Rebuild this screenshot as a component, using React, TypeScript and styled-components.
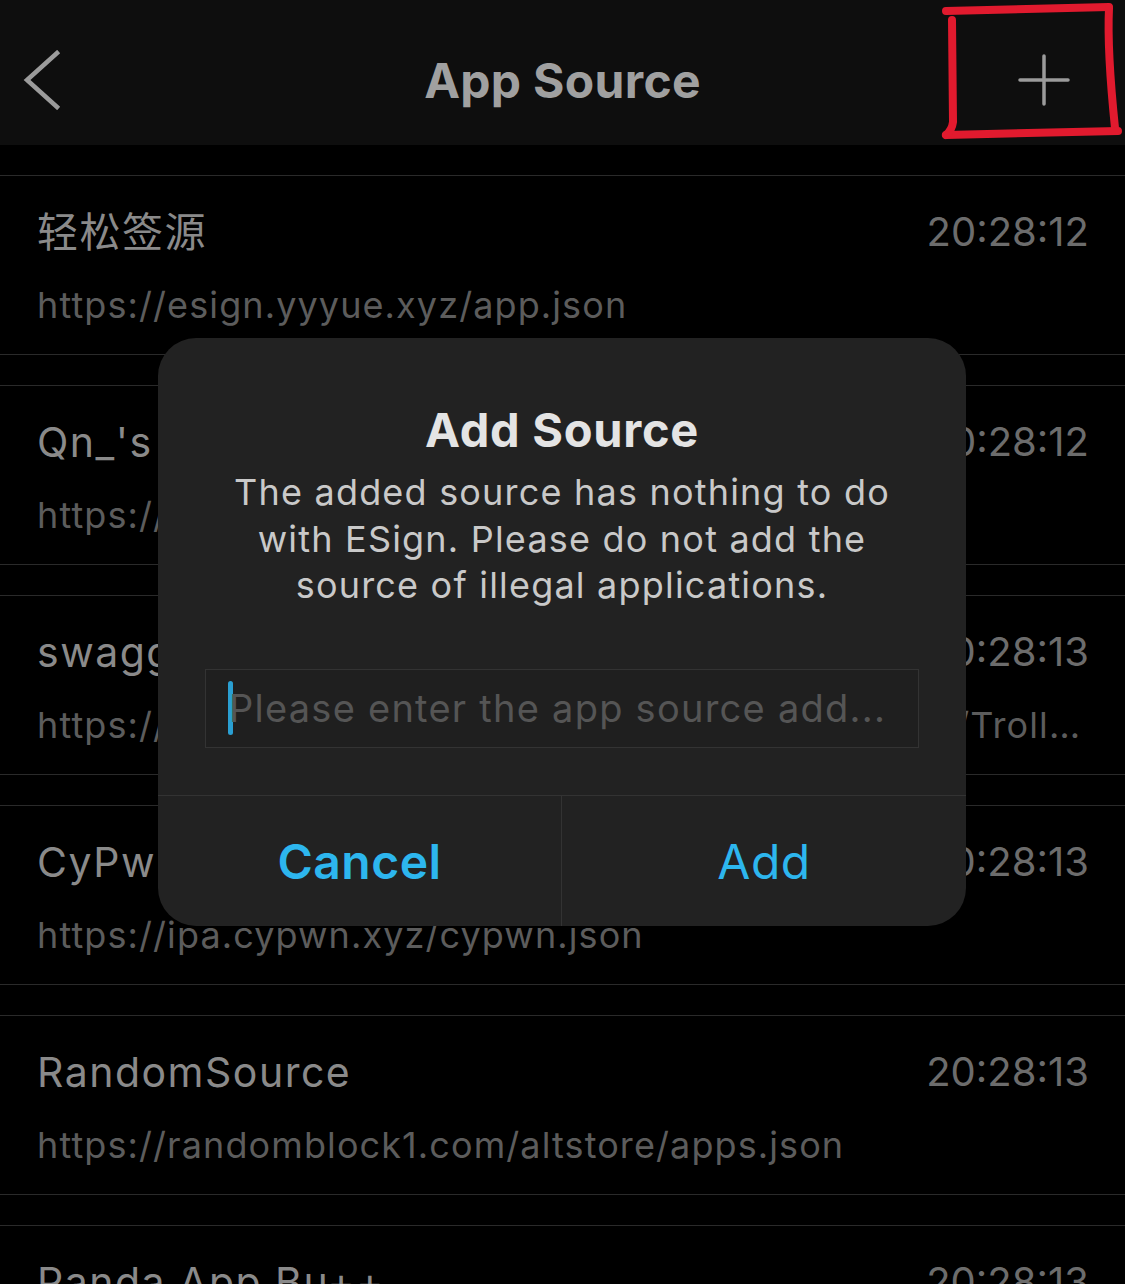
import React from "react";
import styled, { createGlobalStyle } from "styled-components";

const GlobalStyle = createGlobalStyle`
  html, body { margin: 0; padding: 0; background: #000; }
  * { box-sizing: border-box; }
  body { font-family: Inter, "Noto Sans CJK SC", sans-serif; }
`;

const FONT = `Inter, "Noto Sans CJK SC", sans-serif`;

const Page = styled.div`
  position: relative;
  width: 1125px;
  height: 1284px;
  overflow: hidden;
  background: #000;
  font-family: ${FONT};
`;

const Header = styled.header`
  height: 145px;
  background: #0e0e0e;
  display: grid;
  grid-template-columns: 120px 1fr 120px;
  align-items: center;
  padding: 15px 0 0 0;
`;

const BackButton = styled.button`
  background: none;
  border: none;
  padding: 0 0 0 22px;
  display: flex;
  align-items: center;
  justify-content: flex-start;
  height: 60px;
`;

const AddButton = styled.button`
  background: none;
  border: none;
  padding: 0 55px 0 0;
  display: flex;
  align-items: center;
  justify-content: flex-end;
  height: 60px;
`;

const HeaderTitle = styled.h1`
  margin: 0;
  text-align: center;
  font-size: 48px;
  font-weight: 700;
  color: #a0a0a0;
  letter-spacing: 0.3px;
`;

const List = styled.div`
  display: flex;
  flex-direction: column;
  gap: 30px;
  padding-top: 30px;
`;

const Row = styled.div`
  height: 180px;
  border-top: 1px solid #2a2a2a;
  border-bottom: 1px solid #2a2a2a;
  padding: 31px 36px 0 37px;
  display: grid;
  grid-template-columns: 1fr auto;
  grid-template-rows: 50px 46px;
  row-gap: 25px;
  column-gap: 20px;
`;

const Name = styled.div`
  font-size: 41px;
  line-height: 50px;
  letter-spacing: 1.5px;
  color: #8a8a8a;
  white-space: nowrap;
  overflow: hidden;
`;

const Time = styled.div`
  font-size: 40px;
  line-height: 50px;
  color: #6c6c6c;
  text-align: right;
`;

const Url = styled.div`
  grid-column: 1 / -1;
  font-size: 36px;
  line-height: 46px;
  letter-spacing: 1.1px;
  color: #5c5c5c;
  white-space: nowrap;
  overflow: hidden;
  text-overflow: ellipsis;
`;

const Overlay = styled.div`
  position: absolute;
  inset: 0;
  display: flex;
  justify-content: center;
  align-items: flex-start;
  padding: 338px 0 0 0;
`;

const Dialog = styled.div`
  width: 808px;
  height: 588px;
  margin-left: -1px;
  background: #222222;
  border-radius: 38px;
  display: flex;
  flex-direction: column;
  overflow: hidden;
`;

const DialogBody = styled.div`
  padding: 68px 47px 0 47px;
  display: flex;
  flex-direction: column;
  align-items: stretch;
  flex: 1;
`;

const DialogTitle = styled.h2`
  margin: 0;
  text-align: center;
  font-size: 47px;
  line-height: 48px;
  font-weight: 700;
  color: #e4e4e4;
  letter-spacing: 0.7px;
`;

const Message = styled.p`
  margin: 15px 0 0 0;
  text-align: center;
  font-size: 36px;
  line-height: 46.5px;
  letter-spacing: 1.2px;
  color: #c9c9c9;
`;

const InputBox = styled.div`
  margin-top: 60px;
  height: 79px;
  border: 1px solid #333333;
  background: #1f1f1f;
  display: flex;
  align-items: center;
  padding-left: 22px;
  position: relative;
`;

const Caret = styled.span`
  width: 5px;
  height: 54px;
  border-radius: 3px;
  background: #2a9fd2;
  flex: none;
`;

const Placeholder = styled.span`
  font-size: 38px;
  letter-spacing: 1.25px;
  color: #555555;
  white-space: nowrap;
  margin-left: -4px;
`;

const ButtonRow = styled.div`
  height: 131px;
  border-top: 1px solid #333333;
  display: grid;
  grid-template-columns: 1fr 1fr;
`;

const DialogButton = styled.button<{ $bold?: boolean; $divider?: boolean }>`
  background: none;
  border: none;
  border-right: ${(p) => (p.$divider ? "1px solid #333333" : "none")};
  font-family: ${FONT};
  font-size: 48px;
  font-weight: ${(p) => (p.$bold ? 600 : 400)};
  color: #2db6ee;
  letter-spacing: 0.5px;
  padding: 0;
`;

const Annotation = styled.svg`
  position: absolute;
  left: 930px;
  top: 0;
`;

const rows = [
  { name: "轻松签源", time: "20:28:12", url: "https://esign.yyyue.xyz/app.json" },
  { name: "Qn_'s Repo", time: "20:28:12", url: "https://qnblackcat.github.io/AltStore/apps.json" },
  {
    name: "swaggyP36000's TrollStore IPAs",
    time: "20:28:13",
    url: "https://raw.githubusercontent.com/swaggyP36000/TrollStore-IPAs/main/apps_esign.json",
  },
  { name: "CyPwn IPA Library", time: "20:28:13", url: "https://ipa.cypwn.xyz/cypwn.json" },
  { name: "RandomSource", time: "20:28:13", url: "https://randomblock1.com/altstore/apps.json" },
  { name: "Panda App Bu++", time: "20:28:13", url: "https://pandaapp.github.io/apps.json" },
];

export default function App() {
  return (
    <Page>
      <GlobalStyle />
      <Header>
        <BackButton aria-label="Back">
          <svg width="40" height="60" viewBox="0 0 40 60">
            <path d="M35 3 L5 30 L35 57" fill="none" stroke="#9b9b9b" strokeWidth="4.5" strokeLinecap="square" />
          </svg>
        </BackButton>
        <HeaderTitle>App Source</HeaderTitle>
        <AddButton aria-label="Add">
          <svg width="52" height="52" viewBox="0 0 52 52">
            <path d="M26 2 V50 M2 26 H50" fill="none" stroke="#9b9b9b" strokeWidth="3.5" strokeLinecap="round" />
          </svg>
        </AddButton>
      </Header>
      <List>
        {rows.map((r) => (
          <Row key={r.url}>
            <Name>{r.name}</Name>
            <Time>{r.time}</Time>
            <Url>{r.url}</Url>
          </Row>
        ))}
      </List>
      <Overlay>
        <Dialog>
          <DialogBody>
            <DialogTitle>Add Source</DialogTitle>
            <Message>
              The added source has nothing to do
              <br />
              with ESign. Please do not add the
              <br />
              source of illegal applications.
            </Message>
            <InputBox>
              <Caret />
              <Placeholder>Please enter the app source add...</Placeholder>
            </InputBox>
          </DialogBody>
          <ButtonRow>
            <DialogButton $bold $divider>Cancel</DialogButton>
            <DialogButton>Add</DialogButton>
          </ButtonRow>
        </Dialog>
      </Overlay>
      <Annotation width="195" height="145" viewBox="0 0 195 145">
        <g fill="none" stroke="#e11a2e" strokeWidth="8" strokeLinecap="round" strokeLinejoin="round">
          <path d="M16 11 L179 7" />
          <path d="M179 8 Q177 50 185 128" />
          <path d="M16 135 Q100 133 188 131" />
          <path d="M22 20 L23 122 Q22 130 16 135" />
        </g>
      </Annotation>
    </Page>
  );
}
